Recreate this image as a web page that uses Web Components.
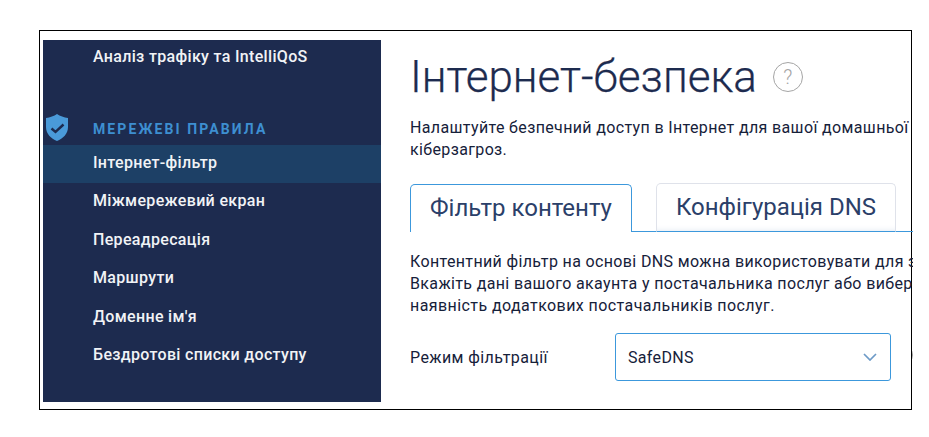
<!DOCTYPE html>
<html lang="uk">
<head>
<meta charset="utf-8">
<title>Інтернет-безпека</title>
<style>
  html, body { margin: 0; background: #fff; }
  body { font-family: Roboto, "Liberation Sans", sans-serif; }
</style>
</head>
<body>
<app-frame>
  <side-nav slot="nav">
    <nav-item class="first">Аналіз трафіку та IntelliQoS</nav-item>
    <nav-heading>МЕРЕЖЕВІ ПРАВИЛА</nav-heading>
    <nav-item active>Інтернет-фільтр</nav-item>
    <nav-item>Міжмережевий екран</nav-item>
    <nav-item>Переадресація</nav-item>
    <nav-item>Маршрути</nav-item>
    <nav-item>Доменне ім'я</nav-item>
    <nav-item>Бездротові списки доступу</nav-item>
  </side-nav>
  <page-content slot="main"></page-content>
</app-frame>

<script>
// Outer black frame with the two columns
class AppFrame extends HTMLElement {
    constructor() {
        super();
        this.attachShadow({ mode: 'open' });
        this.shadowRoot.innerHTML = `
            <style>
                :host {
                    display: flex;
                    box-sizing: border-box;
                    width: 873px;
                    height: 380px;
                    margin: 30px 0 0 39px;
                    padding: 9px 0 7px 3px;
                    border: 1px solid #000;
                    gap: 29px;
                }
            </style>
            <slot name="nav"></slot>
            <slot name="main"></slot>
        `;
    }
}

class SideNav extends HTMLElement {
    constructor() {
        super();
        this.attachShadow({ mode: 'open' });
        this.shadowRoot.innerHTML = `
            <style>
                :host {
                    display: flex;
                    flex-direction: column;
                    flex: none;
                    box-sizing: border-box;
                    width: 338px;
                    background: #1d2b4f;
                }
            </style>
            <slot></slot>
        `;
    }
}

class NavItem extends HTMLElement {
    constructor() {
        super();
        this.attachShadow({ mode: 'open' });
        this.shadowRoot.innerHTML = `
            <style>
                :host {
                    display: block;
                    box-sizing: border-box;
                    height: 38.4px;
                    padding-left: 50px;
                    font-size: 16px;
                    font-weight: 500;
                    line-height: 36.5px;
                    letter-spacing: 0.33px;
                    color: #f1f3f6;
                }
                :host([active]) {
                    background: #1d4066;
                }
                :host(.first) {
                    height: 32px;
                    line-height: 34px;
                }
            </style>
            <slot></slot>
        `;
    }
}

class NavHeading extends HTMLElement {
    constructor() {
        super();
        this.attachShadow({ mode: 'open' });
        this.shadowRoot.innerHTML = `
            <style>
                :host {
                    display: flex;
                    align-items: center;
                    position: relative;
                    box-sizing: border-box;
                    height: 73px;
                    padding: 41px 0 0 50px;
                    font-size: 14px;
                    font-weight: 700;
                    letter-spacing: 2.1px;
                    color: #3d8fd1;
                }
                svg {
                    position: absolute;
                    left: 2px;
                    top: 41px;
                    width: 24px;
                    height: 29px;
                }
            </style>
            <svg viewBox="0 0 24 29" aria-hidden="true">
                <path fill="#4a9ad9" d="M12 1 C15 3 19 4.500 23 5 V14 C23 21 18 25.500 12 28 C6 25.500 1 21 1 14 V5 C5 4.500 9 3 12 1 Z"/>
                <path fill="none" stroke="#1d2b4f" stroke-width="2.400" d="M6.500 15.500 L10.500 19 L18.500 11.500"/>
            </svg>
            <slot></slot>
        `;
    }
}

// Right hand column: title, intro, tabs, filter form.
// It runs 2px past the frame's inner edge, as the original page does.
class PageContent extends HTMLElement {
    constructor() {
        super();
        this.attachShadow({ mode: 'open' });
        this.shadowRoot.innerHTML = `
            <style>
                :host {
                    display: block;
                    flex: none;
                    width: 503px;
                    overflow: hidden;
                    color: #1d2b4f;
                }
                h1 {
                    display: flex;
                    align-items: center;
                    gap: 16px;
                    margin: 11px 0 0;
                    height: 52px;
                    font-size: 44px;
                    font-weight: 300;
                    line-height: 52px;
                    white-space: nowrap;
                    -webkit-text-stroke: 0.25px #1d2b4f;
                }
                p {
                    margin: 0;
                    font-size: 16px;
                    line-height: 22px;
                    letter-spacing: 0.36px;
                    color: #16213a;
                    white-space: nowrap;
                }
                p span { letter-spacing: 0.42px; }
                .intro { margin-top: 14px; }
                .tabs {
                    display: flex;
                    align-items: flex-end;
                    height: 49px;
                    margin-top: 22px;
                    box-shadow: inset 0 -1px 0 #3c98dc;
                }
                .tab {
                    flex: none;
                    box-sizing: border-box;
                    height: 49px;
                    font-size: 24px;
                    line-height: 47px;
                    text-align: center;
                    background: #fff;
                    color: #2b4069;
                }
                .tab.on {
                    width: 222px;
                    margin-right: 24px;
                    border: 1px solid #3c98dc;
                    border-bottom: 0;
                    border-radius: 5px 5px 0 0;
                    height: 48px;
                }
                .tab.off {
                    width: 240px;
                    border: 1px solid #dfe2ea;
                    border-bottom: 1px solid #3c98dc;
                    border-radius: 5px 5px 0 0;
                    box-shadow: inset 0 -6px 6px -6px #dfe6f0;
                }
                .desc { margin-top: 19px; }
                .form {
                    display: flex;
                    align-items: center;
                    margin-top: 16px;
                }
                label {
                    width: 205px;
                    flex: none;
                    font-size: 16px;
                    letter-spacing: 0.4px;
                    color: #16213a;
                }
                .select {
                    display: flex;
                    align-items: center;
                    justify-content: space-between;
                    flex: none;
                    box-sizing: border-box;
                    width: 276px;
                    height: 48px;
                    padding: 0 13px 0 12px;
                    border: 1px solid #3c98dc;
                    border-radius: 3px;
                    font-size: 16px;
                    letter-spacing: 0.33px;
                    color: #16213a;
                }
                .select svg { width: 14px; height: 8px; }
                .hint {
                    flex: none;
                    box-sizing: border-box;
                    width: 20px;
                    height: 20px;
                    border: 1px solid #9a9a9a;
                    border-radius: 50%;
                    margin: -5px 0 0 21px;
                }
            </style>
            <h1>Інтернет-безпека <help-icon></help-icon></h1>
            <p class="intro">Налаштуйте безпечний доступ в Інтернет для вашої домашньої мережі від<br>кіберзагроз.</p>
            <div class="tabs">
                <div class="tab on">Фільтр контенту</div>
                <div class="tab off">Конфігурація DNS</div>
            </div>
            <p class="desc">Контентний фільтр на основі DNS можна використовувати для захисту<br>Вкажіть дані вашого акаунта у постачальника послуг або виберіть<br><span>наявність додаткових постачальників послуг.</span></p>
            <div class="form">
                <label>Режим фільтрації</label>
                <div class="select">
                    <span>SafeDNS</span>
                    <svg viewBox="0 0 14 8" aria-hidden="true"><path fill="none" stroke="#6d9ac7" stroke-width="1.700" d="M1 1 L7 7 L13 1"/></svg>
                </div>
                <div class="hint"></div>
            </div>
        `;
    }
}

class HelpIcon extends HTMLElement {
    constructor() {
        super();
        this.attachShadow({ mode: 'open' });
        this.shadowRoot.innerHTML = `
            <style>
                :host {
                    display: flex;
                    align-items: center;
                    justify-content: center;
                    flex: none;
                    box-sizing: border-box;
                    width: 30px;
                    height: 30px;
                    border: 1px solid #a5a5a5;
                    border-radius: 50%;
                    font-size: 20px;
                    font-weight: 300;
                    line-height: 1;
                    color: #a5a5a5;
                    -webkit-text-stroke: 0;
                }
            </style>
            ?
        `;
    }
}

customElements.define('app-frame', AppFrame);
customElements.define('side-nav', SideNav);
customElements.define('nav-item', NavItem);
customElements.define('nav-heading', NavHeading);
customElements.define('page-content', PageContent);
customElements.define('help-icon', HelpIcon);
</script>
</body>
</html>
